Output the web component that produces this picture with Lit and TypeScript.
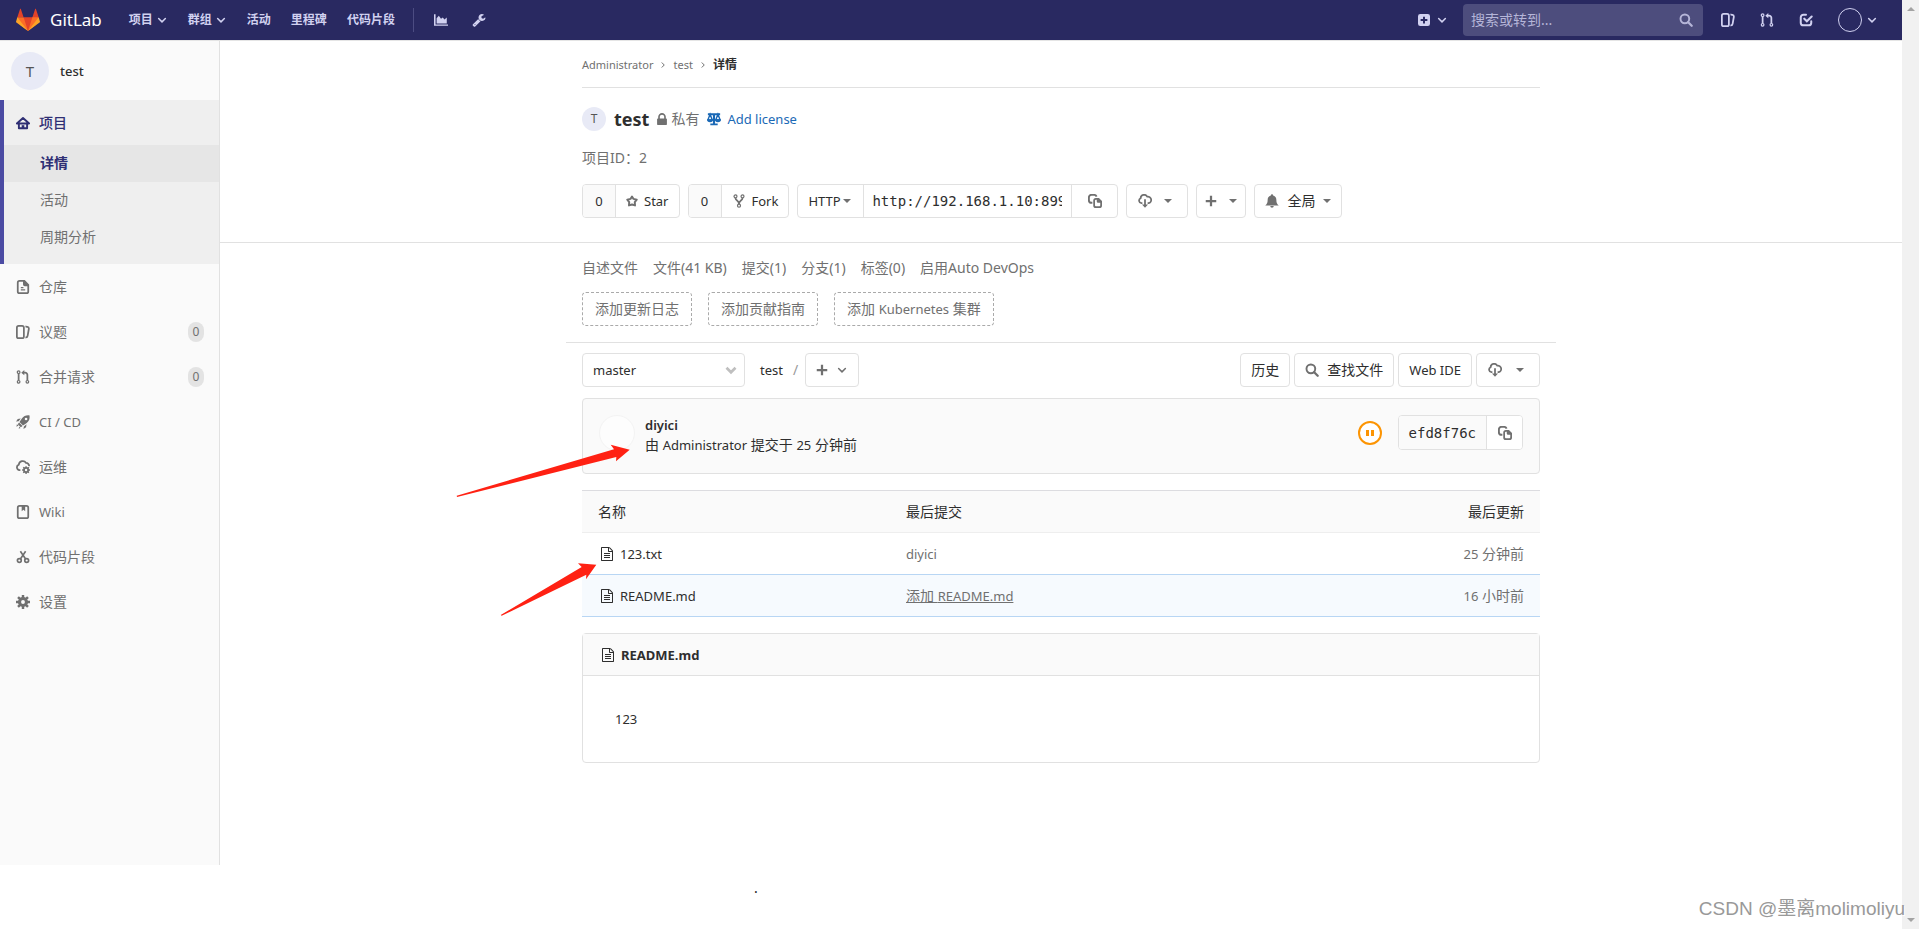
import { LitElement, html, css, svg, nothing } from "lit";
import { customElement } from "lit/decorators.js";
import { classMap } from "lit/directives/class-map.js";

const shapes: Record<string, [string, unknown]> = {
  down: ["0 0 16 16", svg`<path d="M3.500 6l4.500 4.500L12.500 6" fill="none" stroke="currentColor" stroke-width="2" stroke-linecap="round" stroke-linejoin="round"/>`],
  right: ["0 0 16 16", svg`<path d="M5.500 3l5 5-5 5" fill="none" stroke="currentColor" stroke-width="2"/>`],
  thickDown: ["0 0 16 16", svg`<path d="M2 5l6 6 6-6" fill="none" stroke="currentColor" stroke-width="3.600"/>`],
  caret: ["0 0 16 16", svg`<path d="M0 4h16l-8 8z"/>`],
  chart: ["0 0 16 16", svg`<path d="M0 1.500h1.800V13H16v1.700H0zM3 12V6l2.500-3L8 6.500l2-1.500 2 2.500L14.600 5V12z"/>`],
  wrench: ["0 0 1792 1792", svg`<path d="M448 1472q0-26-19-45t-45-19-45 19-19 45 19 45 45 19 45-19 19-45zm644-420l-682 682q-37 37-90 37-52 0-91-37l-106-108q-38-36-38-90 0-53 38-91l681-681q39 98 114.500 173.500t173.500 114.500zm634-435q0 39-23 106-47 134-164.500 217.500t-258.500 83.500q-185 0-316.500-131.500t-131.500-316.500 131.500-316.500 316.500-131.500q58 0 121.500 16.500t107.500 46.500q16 11 16 28t-16 28l-293 169v224l193 107q5-3 79-48.500t135.500-81 70.500-35.500q15 0 23.500 10t8.500 25z"/>`],
  plusSquare: ["0 0 16 16", svg`<path fill-rule="evenodd" d="M3 0h10a3 3 0 0 1 3 3v10a3 3 0 0 1-3 3H3a3 3 0 0 1-3-3V3a3 3 0 0 1 3-3zm3.700 3.500v3.200H3.500v2.600h3.200v3.200h2.600V9.300h3.200V6.700H9.300V3.500z"/>`],
  plus: ["0 0 16 16", svg`<path d="M6.500 1h3v5.500H15v3H9.500V15h-3V9.500H1v-3h5.500z"/>`],
  search: ["0 0 16 16", svg`<g fill="none" stroke="currentColor" stroke-width="2.200"><circle cx="6.700" cy="6.700" r="5"/><path d="M10.500 10.500l4 4" stroke-linecap="round" stroke-width="2.600"/></g>`],
  issues: ["0 0 16 16", svg`<path fill-rule="evenodd" d="M10.458 15.012l.311.055a3 3 0 0 0 3.476-2.433l1.389-7.879A3 3 0 0 0 13.200 1.280L11.230.933a3.002 3.002 0 0 0-.824-.031c.364.590.580 1.280.593 2.020l1.854.328a1 1 0 0 1 .811 1.158l-1.389 7.879a1 1 0 0 1-1.158.810l-.118-.020a3.980 3.980 0 0 1-.541 1.935zM3 0h4a3 3 0 0 1 3 3v10a3 3 0 0 1-3 3H3a3 3 0 0 1-3-3V3a3 3 0 0 1 3-3zm0 2a1 1 0 0 0-1 1v10a1 1 0 0 0 1 1h4a1 1 0 0 0 1-1V3a1 1 0 0 0-1-1H3z"/>`],
  merge: ["0 0 16 16", svg`<g fill="none" stroke="currentColor"><circle cx="3" cy="2.500" r="1.500" stroke-width="1.400"/><circle cx="3" cy="13.500" r="1.500" stroke-width="1.400"/><circle cx="13" cy="13.500" r="1.500" stroke-width="1.400"/><path d="M3 4v8M13 12V5.500a2.500 2.500 0 0 0-2.500-2.500H9" stroke-width="2"/></g><path d="M9.500 0v6L6 3z"/>`],
  todo: ["0 0 16 16", svg`<path d="M8 2H5a3 3 0 0 0-3 3v6a3 3 0 0 0 3 3h6a3 3 0 0 0 3-3v-1.500M6 6.500l3 3 5.500-5.500" fill="none" stroke="currentColor" stroke-width="2.300" stroke-linecap="round"/>`],
  home: ["0 0 16 16", svg`<path fill="none" stroke="currentColor" stroke-width="2.200" stroke-linejoin="round" d="M1 8.500L8 2.200l7 6.300zM3.300 8.500V14h9.400V8.500"/><path d="M6.500 10.500h3V14h-3z"/>`],
  doc: ["0 0 16 16", svg`<path fill-rule="evenodd" d="M4 0h6l5 5v8a3 3 0 0 1-3 3H4a3 3 0 0 1-3-3V3a3 3 0 0 1 3-3zm0 2a1 1 0 0 0-1 1v10a1 1 0 0 0 1 1h8a1 1 0 0 0 1-1V7h-3a2 2 0 0 1-2-2V2zm1.500 6h3v1.300h-3zm0 2.700h5V12h-5z"/>`],
  rocket: ["0 0 16 16", svg`<path fill-rule="evenodd" d="M15.500.500c-4-.500-6.500.800-8.600 3.200L4 8l4 4 4.300-2.900c2.400-2.100 3.700-4.600 3.200-8.600zM11.500 3a1.500 1.500 0 1 1 0 3 1.500 1.500 0 0 1 0-3zM3.500 8.500l4 4-2 1.500-3.500-3.500z"/><path d="M5.500 4L2 4.500 0 7.500l3-.500zM12 10.500l-.5 3.500-3 2 .500-3zM1 10.500L3 12l-2.500 1.500zM4 13l1 2-2 .5z"/>`],
  ops: ["0 0 16 16", svg`<path d="M5 11.500H4a3.200 3.200 0 0 1-.8-6.200A4.500 4.500 0 0 1 11.500 3.400 3.500 3.500 0 0 1 15 7" fill="none" stroke="currentColor" stroke-width="2"/><circle cx="11.500" cy="11.500" r="2.400" fill="none" stroke="currentColor" stroke-width="2"/><path d="M11.500 7v2M11.500 14v2M7 11.500h2M14 11.500h2M8.300 8.300l1.500 1.500M13.200 13.200l1.500 1.500M14.700 8.300l-1.500 1.500M9.800 13.200l-1.500 1.500" stroke="currentColor" stroke-width="1.600"/>`],
  book: ["0 0 16 16", svg`<rect x="2" y="1" width="12" height="14" rx="2" fill="none" stroke="currentColor" stroke-width="2"/><path d="M6.500 1h4v6l-2-1.500-2 1.500z"/>`],
  scissors: ["0 0 16 16", svg`<g fill="none" stroke="currentColor" stroke-width="1.900"><circle cx="3.800" cy="12" r="2.200"/><circle cx="12.200" cy="12" r="2.200"/><path d="M5 1.500l6 8.800M11 1.500l-6 8.800"/></g>`],
  gear: ["0 0 16 16", svg`<circle cx="8" cy="8" r="4" fill="none" stroke="currentColor" stroke-width="3.600"/><path d="M8 0v3.500M8 12.500V16M0 8h3.500M12.500 8H16M2.300 2.300l2.500 2.500M11.200 11.200l2.500 2.500M13.700 2.300l-2.500 2.500M4.800 11.200l-2.500 2.500" stroke="currentColor" stroke-width="2.800"/>`],
  lock: ["320 128 1152 1408", svg`<path d="M640 768h512v-192q0-106-75-181t-181-75-181 75-75 181v192zm832 96v576q0 40-28 68t-68 28h-960q-40 0-68-28t-28-68v-576q0-40 28-68t68-28h32v-192q0-184 132-316t316-132 316 132 132 316v192h32q40 0 68 28t28 68z"/>`],
  scale: ["0 0 16 15", svg`<path d="M1 1h14v2.200H9.200V12.500h3v2H3.800v-2h3V3.200H1z"/><path fill="none" stroke="currentColor" stroke-width="1.600" d="M3.500 2L1 8.500h5zM12.500 2L10 8.500h5z"/><path d="M0 7.800h7a3.500 3.400 0 0 1-7 0zM9 7.800h7a3.500 3.400 0 0 1-7 0z"/>`],
  star: ["0 0 16 16", svg`<path fill="none" stroke="currentColor" stroke-width="2.600" stroke-linejoin="round" d="M8 2l2 3.200 4.300 1.100-2.600 3.200.300 4.400L8 12.600l-4 1.300.300-4.400L1.700 6.300 6 5.200z"/>`],
  fork: ["0 0 14 16", svg`<g fill="none" stroke="currentColor" stroke-width="1.400"><circle cx="3" cy="2.700" r="1.700"/><circle cx="11" cy="2.700" r="1.700"/><circle cx="7" cy="13.300" r="1.700"/></g><path fill="none" stroke="currentColor" stroke-width="2" d="M3 4.500C3 8 7 7 7 11.500M11 4.500C11 8 7 7 7 11.500"/>`],
  copy: ["0 0 16 16", svg`<path d="M5 10H4a3 3 0 0 1-3-3V4a3 3 0 0 1 3-3h3a3 3 0 0 1 2.800 2" fill="none" stroke="currentColor" stroke-width="2.200"/><path fill-rule="evenodd" d="M9 4.500h3.500L16 8v5a3 3 0 0 1-3 3H9a3 3 0 0 1-3-3V7.500a3 3 0 0 1 3-3zm0 2.200a1 1 0 0 0-1 1v5.200a1 1 0 0 0 1 1h4a1 1 0 0 0 1-1V10h-2.500a1.500 1.500 0 0 1-1.500-1.500V6.700z"/>`],
  download: ["0 0 16 16", svg`<path fill="none" stroke="currentColor" stroke-width="2" d="M5 10.500H4A3 3 0 0 1 3 4.800 4 4 0 0 1 10.500 3a3.800 3.800 0 0 1 1.500 7.500h-1"/><path d="M7 6h2v6h2.500L8 15.800 4.500 12H7z"/>`],
  bell: ["0 0 16 16", svg`<path d="M8 .3a1.300 1.300 0 0 1 1.300 1.400C12 2.300 13 4.500 13 7c0 3 .8 4.500 2.700 6H.3C2.200 11.500 3 10 3 7c0-2.500 1-4.700 3.700-5.300A1.300 1.300 0 0 1 8 .3zM6 13.800h4a2 2 0 0 1-4 0z"/>`],
  file: ["128 0 1536 1792", svg`<path d="M1596 380q28 28 48 76t20 88v1152q0 40-28 68t-68 28h-1344q-40 0-68-28t-28-68v-1600q0-40 28-68t68-28h896q40 0 88 20t76 48zm-444-244v376h376q-10-29-22-41l-313-313q-12-12-41-22zm384 1528v-1024h-416q-40 0-68-28t-28-68v-416h-768v1536h1280zM512 768h768v128H512zM512 1024h768v128H512zM512 1280h768v128H512z"/>`],
  pause: ["0 0 24 24", svg`<circle cx="12" cy="12" r="11" fill="#fff" stroke="currentColor" stroke-width="2"/><path d="M8 9h3v6H8zM13 9h3v6h-3z"/>`],
};

const icon = (name: string, size = "s14") => html`<svg class="icon ${size}" viewBox=${shapes[name][0]} aria-hidden="true">${shapes[name][1]}</svg>`;

const sections = [
  { icon: "doc", label: "仓库" },
  { icon: "issues", label: "议题", count: 0 },
  { icon: "merge", label: "合并请求", count: 0 },
  { icon: "rocket", label: "CI / CD", latin: true },
  { icon: "ops", label: "运维" },
  { icon: "book", label: "Wiki", latin: true },
  { icon: "scissors", label: "代码片段" },
  { icon: "gear", label: "设置" },
];

@customElement("app-root")
export class AppRoot extends LitElement {
  static styles = css`
    :host { display: flex; min-height: 100vh; position: relative; background: #fff; color: #2e2e2e;
      font: 14px/20px "Noto Sans", "Noto Sans CJK SC", sans-serif; }
    * { box-sizing: border-box; }
    a { color: inherit; text-decoration: none; }
    ul { list-style: none; margin: 0; padding: 0; }
    button, input, select { font: inherit; color: inherit; margin: 0; }
    .icon { display: block; flex: none; fill: currentColor; }
    .s8 { width: 8px; height: 8px; }
    .s10 { width: 10px; height: 12px; }
    .s12 { width: 12px; height: 12px; }
    .s14 { width: 14px; height: 14px; }
    .s24 { width: 24px; height: 24px; }
    .latin { font-size: 13px; }
    .page { flex: 1; min-width: 0; display: flex; flex-direction: column; }

    .topbar { display: flex; align-items: center; height: 41px; padding: 0 24px 0 16px; background: #292961;
      border-bottom: 1px solid #e5e5e5; color: #d1d1f0; }
    .brand { display: flex; align-items: center; gap: 10px; color: #fff; font-size: 17px; }
    .menu { display: flex; align-items: center; gap: 20px; margin-left: 27px; font-size: 12px; font-weight: 700; }
    .menu a, .menu button { display: flex; align-items: center; gap: 3px; }
    .plain { border: 0; padding: 0; background: none; cursor: pointer; }
    .rule { width: 1px; height: 24px; background: #4c4c82; margin: 0 20px 0 18px; }
    .tools { display: flex; gap: 24px; }
    .right { margin-left: auto; display: flex; align-items: center; }
    .add { display: flex; align-items: center; gap: 6px; margin-right: 15px; }
    .search { display: flex; align-items: center; width: 240px; height: 32px; padding: 0 10px 0 8px; border-radius: 4px;
      background: #4d4d7d; color: #b5b5d8; margin-right: 18px; }
    .search input { flex: 1; min-width: 0; border: 0; background: none; outline: 0; padding: 0; }
    .search input::placeholder { color: #b5b5d8; opacity: 1; }
    .links { display: flex; gap: 25px; align-items: center; }
    .user { display: flex; align-items: center; gap: 4px; }
    .ring { width: 24px; height: 24px; border: 1px solid #d1d1f0; border-radius: 50%; }

    .body { flex: 1; display: flex; align-items: stretch; }
    .sidebar { width: 220px; flex: none; background: #fafafa; border-right: 1px solid #e1e1e1; color: #707070; }
    .context { display: flex; align-items: center; gap: 11px; height: 59px; padding: 0 11px; color: #2e2e2e; font-weight: 500; font-size: 13px; }
    .avatar { display: grid; place-items: center; border-radius: 50%; background: #e8eaf6; color: #555; font-weight: 400; }
    .avatar.big { width: 38px; height: 38px; font-size: 15px; }
    .avatar.small { width: 24px; height: 24px; font-size: 12px; }
    .entry { display: flex; align-items: center; gap: 9px; height: 45px; padding: 0 15px 0 16px; }
    .entry .count { margin-left: auto; width: 16px; border-radius: 10px; background: #e3e3e3; text-align: center; font-size: 12px; }
    .active { border-left: 4px solid #4b4ba3; background: #efefef; height: 164px; }
    .active .entry { padding-left: 12px; color: #2f2f74; font-weight: 500; }
    .sub a { display: block; height: 37px; padding: 8px 36px; }
    .sub .current { background: #e6e6e6; color: #2f2f74; font-weight: 700; }

    .content { flex: 1; min-width: 0; }
    .limit { position: relative; max-width: 990px; margin: 0 auto; padding: 0 16px; }
    .crumbs { display: flex; align-items: center; gap: 6px; height: 47px; padding-top: 2px; border-bottom: 1px solid #e1e1e1; font-size: 12px; color: #707070; }
    .crumbs .latin { font-size: 11px; }
    .crumbs strong { color: #2e2e2e; }
    .summary { border-bottom: 1px solid #e1e1e1; }
    .title { display: flex; align-items: center; gap: 8px; margin-top: 18px; height: 26px; }
    .title h1 { margin: 0; font-size: 18px; line-height: 24px; }
    .title .private { display: flex; align-items: center; gap: 4px; color: #707070; }
    .title .license { display: flex; align-items: center; gap: 6px; color: #1b69b6; font-size: 13px; }
    .pid { margin: 16px 0; color: #707070; }
    .row { display: flex; align-items: center; gap: 8px; }
    .actions { padding-bottom: 24px; color: #2e2e2e; }
    .btn, .group { display: flex; align-items: center; height: 34px; border: 1px solid #e1e1e1; border-radius: 4px; background: #fff; white-space: nowrap; }
    .btn { gap: 8px; padding: 0 10px; cursor: pointer; }
    .btn.wide { gap: 12px; padding: 0 15px 0 11px; }
    .btn.narrow { gap: 12px; padding: 0 8px; }
    .btn .icon, .part .icon { color: #707070; }
    .part { display: flex; align-items: center; gap: 6px; height: 32px; border: 0; background: none; padding: 0 10px; }
    .part + .part { border-left: 1px solid #e1e1e1; }
    .cell { justify-content: center; width: 32px; background: #fafafa; border-radius: 3px 0 0 3px; }
    .part.proto { gap: 2px; width: 65px; }
    .url { display: block; width: 208px; padding: 0 9px 0 8px; font-family: "DejaVu Sans Mono", monospace; outline: 0; border-radius: 0; }
    .clip { width: 46px; justify-content: center; }

    .stats { display: flex; gap: 15px; padding-top: 15px; color: #707070; }
    .suggest { display: flex; gap: 16px; padding: 14px 0 16px; color: #707070; }
    .suggest a { height: 34px; padding: 6px 12px; border: 1px dashed #aaa; border-radius: 4px; }
    .divider { height: 1px; margin: 0 -16px; background: #e1e1e1; }
    .tree-bar { display: flex; align-items: center; padding: 10px 0 11px; }
    .branch { display: grid; width: 163px; align-items: center; margin-right: 15px; }
    .branch > * { grid-area: 1 / 1; }
    .branch select { appearance: none; height: 34px; border: 1px solid #e1e1e1; border-radius: 4px; background: #fff; padding: 0 10px; font-size: 13px; }
    .branch .icon { justify-self: end; margin-right: 8px; color: #bfbfbf; pointer-events: none; }
    .slash { color: #999; margin: 0 7px 0 10px; }
    .tree-bar .row { margin-left: auto; gap: 4px; }
    .tree-bar .wide { gap: 14px; }

    .commit { display: flex; align-items: flex-start; height: 76px; padding: 16px; border: 1px solid #e1e1e1; border-radius: 4px; background: #fafafa; }
    .face { width: 36px; height: 36px; border-radius: 50%; background: #fdfdfd; border: 1px solid #f3f3f3; margin-right: 10px; }
    .commit p { margin: 0; }
    .commit strong { font-weight: 600; font-size: 13px; }
    .status { display: flex; align-items: center; height: 35px; margin-left: auto; margin-right: 16px; color: #fc9403; }
    .sha { font-family: "DejaVu Sans Mono", monospace; }
    .commit .group { height: 35px; overflow: hidden; }
    .commit .part { height: 33px; background: #fff; }
    .commit .part.sha { background: #fafafa; }
    .commit .clip { width: 36px; }

    table { width: 100%; margin: 16px 0; border-collapse: collapse; table-layout: fixed; }
    th, td { height: 42px; padding: 0 16px; text-align: left; font-weight: 400; }
    th { background: #fafafa; border-top: 1px solid #dcdce0; border-bottom: 1px solid #eee; color: #2e2e2e; }
    td { color: #707070; }
    .when { text-align: right; }
    .name { width: 308px; }
    .name a, .readme h2 { display: flex; align-items: center; gap: 6px; padding-left: 2px; color: #2e2e2e; font-size: 13px; }
    .hover td { background: #f6fafe; border-top: 1px solid #b8d6f4; border-bottom: 1px solid #b8d6f4; }
    .hover .message { text-decoration: underline; }
    .readme { border: 1px solid #e1e1e1; border-radius: 4px; }
    .readme h2 { margin: 0; height: 42px; padding-left: 18px; background: #fafafa; border-bottom: 1px solid #e1e1e1; font-weight: 700; line-height: 20px; }
    .readme p { margin: 0; padding: 33px 32px; }
    .arrows { position: absolute; left: -110px; top: 200px; width: 174px; height: 174px; fill: #ff2113; pointer-events: none; }

    .foot { height: 64px; display: flex; justify-content: center; padding: 13px 390px 0 0; color: #222; }
    .scroll { width: 17px; flex: none; display: flex; flex-direction: column; justify-content: space-between; align-items: center; padding: 5px 0; background: #f1f1f1; color: #a3a3a3; }
    .up { transform: rotate(180deg); }
    .mark { position: absolute; right: 14px; bottom: 6px; font: 19px/28px "Liberation Sans", "Noto Sans CJK SC", sans-serif; color: #999; text-shadow: 1px 1px 0 #fff; }
  `;

  private topbar() {
    return html`<header class="topbar">
      <a class="brand" href="#"><svg width="24" height="24" viewBox="0 0 36 36" aria-hidden="true">
        <path fill="#e24329" d="M2 14l9.380 9v-9l-4-12.280c-.205-.632-1.176-.632-1.380 0zM34 14l-9.380 9v-9l4-12.280c.205-.632 1.176-.632 1.380 0zM18 34.380L3 14h30z"/>
        <path fill="#fc6d26" d="M18 34.380L11.380 14H2l4 11zM18 34.380L24.620 14H34l-4 11z"/>
        <path fill="#fca326" d="M2 14L.1 20.160c-.180.565 0 1.200.5 1.560l17.420 12.660zM34 14l1.900 6.160c.180.565 0 1.200-.5 1.560L18 34.380z"/>
      </svg>GitLab</a>
      <nav class="menu">
        <button class="plain">项目 ${icon("down", "s12")}</button>
        <button class="plain">群组 ${icon("down", "s12")}</button>
        <a href="#">活动</a><a href="#">里程碑</a><a href="#">代码片段</a>
      </nav>
      <span class="rule"></span>
      <div class="tools"><a href="#" aria-label="Charts">${icon("chart")}</a><a href="#" aria-label="Admin">${icon("wrench")}</a></div>
      <div class="right">
        <button class="plain add" aria-label="New">${icon("plusSquare", "s12")}${icon("down", "s12")}</button>
        <label class="search"><input type="text" placeholder="搜索或转到..." aria-label="搜索或转到..." />${icon("search", "s14")}</label>
        <div class="links">
          <a href="#" aria-label="Issues">${icon("issues")}</a>
          <a href="#" aria-label="Merge requests">${icon("merge")}</a>
          <a href="#" aria-label="Todos">${icon("todo")}</a>
          <button class="plain user" aria-label="User"><span class="ring"></span>${icon("down", "s12")}</button>
        </div>
      </div>
    </header>`;
  }

  private sidebar() {
    return html`<aside class="sidebar">
      <a class="context" href="#"><span class="avatar big">T</span>test</a>
      <ul>
        <li class="active">
          <a class="entry" href="#">${icon("home")}项目</a>
          <ul class="sub">
            <li><a class="current" href="#">详情</a></li>
            <li><a href="#">活动</a></li>
            <li><a href="#">周期分析</a></li>
          </ul>
        </li>
        ${sections.map((s) => html`<li><a class="entry" href="#">${icon(s.icon)}<span class=${classMap({ latin: !!s.latin })}>${s.label}</span>${s.count === undefined ? nothing : html`<span class="count">${s.count}</span>`}</a></li>`)}
      </ul>
    </aside>`;
  }

  private summary() {
    return html`<section class="summary"><div class="limit">
      <nav class="crumbs"><a class="latin" href="#">Administrator</a>${icon("right", "s8")}<a class="latin" href="#">test</a>${icon("right", "s8")}<strong>详情</strong></nav>
      <div class="title">
        <span class="avatar small">T</span><h1>test</h1>
        <span class="private">${icon("lock", "s10")}私有</span>
        <a class="license" href="#">${icon("scale")}Add license</a>
      </div>
      <p class="pid">项目ID：2</p>
      <div class="row actions">
        <div class="group latin"><span class="part cell">0</span><button class="part">${icon("star", "s12")}Star</button></div>
        <div class="group latin"><span class="part cell">0</span><button class="part">${icon("fork")}Fork</button></div>
        <div class="group"><button class="part proto latin">HTTP${icon("caret", "s8")}</button>
          <input class="part url" aria-label="Clone URL" readonly value="http://192.168.1.10:899" />
          <button class="part clip" aria-label="Copy">${icon("copy")}</button></div>
        <button class="btn wide" aria-label="Download">${icon("download")}${icon("caret", "s8")}</button>
        <button class="btn narrow" aria-label="Create">${icon("plus", "s12")}${icon("caret", "s8")}</button>
        <button class="btn">${icon("bell")}全局${icon("caret", "s8")}</button>
      </div>
    </div></section>`;
  }

  private fileRow(name: string, message: unknown, when: unknown, hover = false) {
    return html`<tr class=${classMap({ hover })}>
      <td><span class="name"><a href="#">${icon("file")}${name}</a></span></td>
      <td><a class="message" href="#">${message}</a></td>
      <td class="when">${when}</td></tr>`;
  }

  private files() {
    return html`<div class="limit">
      <nav class="stats"><a href="#">自述文件</a><a href="#">文件(41 KB)</a><a href="#">提交(1)</a><a href="#">分支(1)</a><a href="#">标签(0)</a><a href="#">启用Auto DevOps</a></nav>
      <div class="suggest"><a href="#">添加更新日志</a><a href="#">添加贡献指南</a><a href="#">添加 <span class="latin">Kubernetes</span> 集群</a></div>
      <div class="divider"></div>
      <div class="tree-bar">
        <div class="branch"><select aria-label="Branch"><option>master</option></select>${icon("thickDown", "s12")}</div>
        <a class="latin" href="#">test</a><span class="slash">/</span>
        <button class="btn" aria-label="Add">${icon("plus", "s12")}${icon("down", "s12")}</button>
        <div class="row">
          <a class="btn" href="#">历史</a><a class="btn" href="#">${icon("search")}查找文件</a><a class="btn latin" href="#">Web IDE</a>
          <button class="btn wide" aria-label="Download">${icon("download")}${icon("caret", "s8")}</button>
        </div>
      </div>
      <div class="commit">
        <span class="face"></span>
        <div><p><strong>diyici</strong></p><p>由 <span class="latin">Administrator</span> 提交于 <span class="latin">25</span> 分钟前</p></div>
        <a class="status" href="#" aria-label="Pending">${icon("pause", "s24")}</a>
        <div class="group"><span class="part sha">efd8f76c</span><button class="part clip" aria-label="Copy">${icon("copy")}</button></div>
      </div>
      <table>
        <colgroup><col class="name" /><col /><col /></colgroup>
        <thead><tr><th>名称</th><th>最后提交</th><th class="when">最后更新</th></tr></thead>
        <tbody>
          ${this.fileRow("123.txt", html`<span class="latin">diyici</span>`, html`<span class="latin">25</span> 分钟前`)}
          ${this.fileRow("README.md", html`添加 <span class="latin">README.md</span>`, html`<span class="latin">16</span> 小时前`, true)}
        </tbody>
      </table>
      <article class="readme"><h2>${icon("file")}README.md</h2><p class="latin">123</p></article>
      <svg class="arrows" viewBox="456 444 174 174" aria-hidden="true">
        <path d="M456.700 496.700L614 450.300l-3.300-4.600 19 5-13.700 11.600.3-4.300L457 498zM500.700 616l81-48-3.700-3.700 18.300 1.400L586 580.300l.3-4.600-84.600 41z"/>
      </svg>
    </div>`;
  }

  render() {
    return html`<div class="page">
        ${this.topbar()}
        <div class="body">${this.sidebar()}<main class="content">${this.summary()}${this.files()}</main></div>
        <footer class="foot">.</footer>
      </div>
      <div class="scroll">${icon("caret", "s8 up")}${icon("caret", "s8")}</div>
      <div class="mark">CSDN @墨离molimoliyu</div>`;
  }
}
